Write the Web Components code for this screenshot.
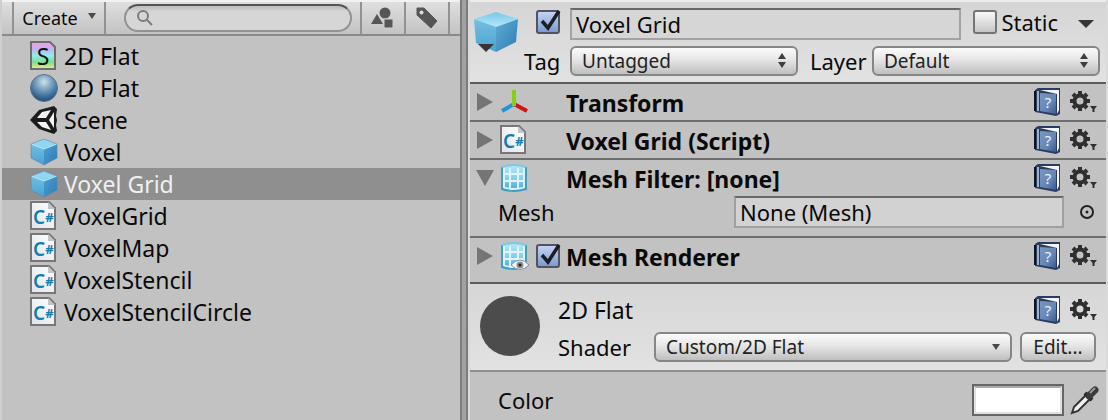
<!DOCTYPE html>
<html lang="en">
<head>
<meta charset="utf-8">
<title>Voxel Grid – Inspector</title>
<style>
  html, body { margin: 0; }
  body {
    font: 22px/28px "Noto Sans", "Open Sans", sans-serif;
    color: #0a0a0a;
    background: #c2c2c2;
    --line: #6e6e6e;
    --control: linear-gradient(#fbfbfb, #e6e6e6 45%, #c0bfc0);
  }
</style>
</head>
<body>
<editor-window>
  <project-panel slot="project">
    <asset-row icon="shader">2D Flat</asset-row>
    <asset-row icon="material">2D Flat</asset-row>
    <asset-row icon="scene">Scene</asset-row>
    <asset-row icon="cube">Voxel</asset-row>
    <asset-row icon="cube" selected>Voxel Grid</asset-row>
    <asset-row icon="script">VoxelGrid</asset-row>
    <asset-row icon="script">VoxelMap</asset-row>
    <asset-row icon="script">VoxelStencil</asset-row>
    <asset-row icon="script">VoxelStencilCircle</asset-row>
  </project-panel>
  <inspector-panel slot="inspector">
    <object-header></object-header>
    <component-section icon="transform" heading="Transform"></component-section>
    <component-section icon="script" heading="Voxel Grid (Script)"></component-section>
    <component-section icon="mesh" heading="Mesh Filter: [none]" open>
      <mesh-field></mesh-field>
    </component-section>
    <component-section icon="renderer" heading="Mesh Renderer" toggle last></component-section>
    <material-header></material-header>
    <color-field></color-field>
  </inspector-panel>
</editor-window>

<script>
const MESH = `<defs><linearGradient id="g" x2="0" y2="1"><stop offset="0" stop-color="#b5e8f6"/><stop offset=".5" stop-color="#8fcfea"/><stop offset="1" stop-color="#4aa6d2"/></linearGradient></defs>
    <path d="M2 4Q14 0 26 4V26Q14 30 2 26Z" fill="url(#g)"/><path d="M3 11H25M3 18H25M4 25Q14 27 24 25M10 5V26M18 5V26M4 5V25M24 5V25" fill="none" stroke="#dcf5fc" stroke-width="2"/><path d="M2 4V26Q14 30 26 26V4" fill="none" stroke="#3d9fca" stroke-width="2"/><path d="M2 4Q14 0 26 4" fill="none" stroke="#7cc9e4" stroke-width="2"/>`;

const ICONS = {
  shader: [28, 30, `<defs><linearGradient id="g" x2="0" y2="1"><stop offset="0" stop-color="#f59be8"/><stop offset=".3" stop-color="#b9b8f4"/><stop offset=".5" stop-color="#8df0ee"/><stop offset=".75" stop-color="#7fdc8c"/><stop offset="1" stop-color="#f2ee84"/></linearGradient></defs>
    <path d="M1 1H20L25 6V28H1Z" fill="url(#g)" stroke="#6d6d6d" stroke-width="2"/><text x="13" y="24" text-anchor="middle" font-size="23" fill="#111">S</text>`],
  material: [28, 28, `<defs><radialGradient id="g" cx=".5" cy=".28" r=".7"><stop offset="0" stop-color="#d3e2ec"/><stop offset=".35" stop-color="#86abc6"/><stop offset=".7" stop-color="#4778a3"/><stop offset="1" stop-color="#244d80"/></radialGradient></defs>
    <circle cx="14" cy="14" r="13.5" fill="url(#g)" stroke="#5d7387"/>`],
  scene: [28, 28, `<path d="M0 14 9 4 24 0 27 3 26 10 27 14 26 19 27 25 24 28 9 23Z" fill="#1c1c1c"/><path d="M7 12 12 6 21 4 16 12ZM7 16H16L21 24 12 21ZM19 14 24 6V22Z" fill="#f4f4f4"/>`],
  cube: [28, 28, `<defs><linearGradient id="a" x2="0" y2="1"><stop offset="0" stop-color="#6cc0e8"/><stop offset="1" stop-color="#4ba0d0"/></linearGradient><linearGradient id="b" x2="1" y2="1"><stop offset="0" stop-color="#4c9fd2"/><stop offset="1" stop-color="#2b7db4"/></linearGradient></defs>
    <path d="M1 6 14 11V27L1 20Z" fill="url(#a)"/><path d="M27 6 14 11V27L27 20Z" fill="url(#b)"/><path d="M1 6 14 1 27 6 14 11Z" fill="#8fd6f2"/><path d="M1 6 14 11 27 6" fill="none" stroke="#b4e6f6"/><path d="M1 6 14 1 27 6V20L14 27 1 20Z" fill="none" stroke="#65849a" stroke-opacity=".6"/>`],
  prefab: [44, 40, `<defs><linearGradient id="a" x2="0" y2="1"><stop offset="0" stop-color="#74bfe2"/><stop offset="1" stop-color="#4aa3d0"/></linearGradient><linearGradient id="b" x2="1" y2="1"><stop offset="0" stop-color="#62abd4"/><stop offset="1" stop-color="#2c7eb4"/></linearGradient><linearGradient id="c" x2="0" y2="1"><stop offset="0" stop-color="#78c8ea"/><stop offset="1" stop-color="#b4e8f8"/></linearGradient></defs>
    <path d="M0 7 22 14V40L2 31Z" fill="url(#a)"/><path d="M44 7 22 14V40L42 30Z" fill="url(#b)"/><path d="M0 7 22 0 44 7 22 15Z" fill="url(#c)"/>`],
  script: [28, 30, `<defs><linearGradient id="g" x1="1" y1="0" x2="0" y2="1"><stop offset="0" stop-color="#fff"/><stop offset="1" stop-color="#dfe4e9"/></linearGradient></defs>
    <path d="M1 1H19L25 7V28H1Z" fill="url(#g)" stroke="#777" stroke-width="2"/><path d="M18 1V8H25Z" fill="#c2c6ca"/><text x="3" y="23" font-weight="600" fill="#117ead"><tspan font-size="19">C</tspan><tspan font-size="13" font-weight="700" dy="-2">#</tspan></text>`],
  transform: [28, 28, `<g fill="none" stroke-width="4"><path d="M14 16 2 23" stroke="#2494d8"/><path d="M14 16 27 23" stroke="#d11313"/><path d="M14 18V2" stroke="#86cf17"/></g>`],
  mesh: [28, 30, MESH],
  renderer: [28, 30, MESH + `<path d="M11 24Q20 14 29 24 20 33 11 24Z" fill="#f4f4f4" stroke="#8a9298"/><circle cx="20" cy="24" r="3.5" fill="#86929a"/><circle cx="20" cy="24" r="1.5" fill="#222"/>`],
  shapes: [24, 22, `<g fill="#565656"><circle cx="14" cy="6" r="5.5"/><path d="M0 17 6 7 12 17Z"/><path d="M13 12H22V21H13Z" stroke="#d0d0d0" stroke-width="1"/></g>`],
  tag: [24, 24, `<path d="M2 2H9L22 15 16 22 2 9Z" fill="#565656" stroke="#565656" stroke-linejoin="round"/><circle cx="6.500" cy="6.500" r="2" fill="#dcdcdc"/>`],
  lens: [18, 18, `<circle cx="7" cy="7" r="5" fill="none" stroke="#7c7c7c" stroke-width="2"/><path d="M10.500 10.500 16 16" stroke="#7c7c7c" stroke-width="2"/>`],
  closed: [16, 18, `<path d="M0 0 16 9 0 18Z" fill="#757575"/>`],
  opened: [18, 16, `<path d="M0 0H18L9 16Z" fill="#757575"/>`],
  caret: [16, 8, `<path d="M0 0H16L8 8Z" fill="#353535"/>`],
  smallcaret: [8, 6, `<path d="M0 0H8L4 6Z" fill="#4a4a4a"/>`],
  updown: [8, 16, `<path d="M0 6 4 0 8 6ZM0 9H8L4 15Z" fill="#3e3e3e"/>`],
  help: [28, 30, `<defs><linearGradient id="g" x2="1" y2="1"><stop offset="0" stop-color="#7b97bd"/><stop offset=".6" stop-color="#6486b6"/><stop offset="1" stop-color="#38598c"/></linearGradient></defs>
    <path d="M1 3 4 1H26V27L22 29 1 25Z" fill="#2a3c60"/><path d="M6 3H25V23L23 27V7Z" fill="#f4f5f8"/><path d="M4 4V24" stroke="#9db2cf" stroke-width="2"/><path d="M1 4V24" stroke="#0c1424" stroke-width="2"/><path d="M6 6 22 7V27L6 24Z" fill="url(#g)"/><text x="14" y="21" text-anchor="middle" font-size="15" fill="#eef4fb">?</text>`],
  gear: [28, 24, `<g stroke="#2f2f2f" fill="none"><circle cx="10" cy="11" r="5.500" stroke-width="4"/><path d="M10 1V4M10 18V21M0 11H3M17 11H20M3 4 5 6M15 16 17 18M3 18 5 16M15 6 17 4" stroke-width="4"/></g><path d="M20 16H27L24.500 19V22H22.500V19Z" fill="#2f2f2f"/>`],
  pick: [14, 14, `<circle cx="7" cy="7" r="6" fill="none" stroke="#222" stroke-width="2"/><circle cx="7" cy="7" r="1.500" fill="#222"/>`],
  dropper: [30, 30, `<path d="M2 28 4 22 16 10 20 14 8 26Z" fill="#f2f2f2" stroke="#333" stroke-width="2"/><path d="M15 8 22 15" stroke="#222" stroke-width="4"/><path d="M19 11 25 5" stroke="#3a3a3a" stroke-width="7" stroke-linecap="round"/><path d="M20 8 25 3" stroke="#999" stroke-width="2"/>`],
};

const define = (name, css, html) => customElements.define(name, class extends HTMLElement {
  constructor() {
    super();
    this.attachShadow({ mode: "open" });
  }
  connectedCallback() {
    const body = typeof html === "function" ? html(this) : html;
    this.shadowRoot.innerHTML = `<style>
      :host { display: block; }
      *, :host { box-sizing: border-box; }
      button, input, select { font: inherit; color: inherit; margin: 0; border-radius: 0; }
      ${css}</style>${body}`;
  }
});

define("ui-icon", `
  :host { display: inline-block; flex: none; line-height: 0; }
  svg { display: block; overflow: visible; font-family: "Noto Sans", sans-serif; }
`, el => {
  const [w, h, art] = ICONS[el.getAttribute("name")];
  return `<svg width="${w}" height="${h}" viewBox="0 0 ${w} ${h}" aria-hidden="true">${art}</svg>`;
});

define("editor-window", `
  :host { display: grid; grid-template-columns: minmax(0, 23fr) 8px minmax(0, 32fr); min-height: 100vh; }
  .splitter { background: #a2a2a2; border: solid #7c7c7c; border-width: 0 2px; }
`, `<slot name="project"></slot><div class="splitter"></div><slot name="inspector"></slot>`);

define("project-panel", `
  :host { border-left: 2px solid #cfcfcf; }
  header { display: flex; height: 36px; border-top: 2px solid #f2f2f2; border-bottom: 2px solid #8a8a8a;
    background: linear-gradient(#dfdfdf, #c3c3c3); padding: 0 10px; }
  button { border: 0 solid #929292; background: none; padding: 0; display: flex; align-items: center; justify-content: center; }
  .create { width: 94px; border-width: 0 2px; font-size: 18px; gap: 10px; }
  .create ui-icon { margin-bottom: 4px; }
  .filter { width: 44px; border-left-width: 2px; }
  .filter:last-child { width: 46px; border-right-width: 2px; }
  label { flex: 1; min-width: 0; display: flex; align-items: center; gap: 6px; height: 28px; margin: 2px 8px 0 18px; padding: 0 10px;
    border: 2px solid #929292; border-top-color: #555; border-radius: 14px; background: linear-gradient(#bcbcbc, #d6d6d6 6px); }
  input { flex: 1; min-width: 0; border: 0; outline: 0; background: none; height: 22px; padding: 0; font-size: 18px; }
  .list { padding-top: 4px; }
`, `<header>
    <button class="create">Create <ui-icon name="smallcaret"></ui-icon></button>
    <label><ui-icon name="lens"></ui-icon><input type="search" aria-label="Search"></label>
    <button class="filter" aria-label="Filter by type"><ui-icon name="shapes"></ui-icon></button>
    <button class="filter" aria-label="Filter by label"><ui-icon name="tag"></ui-icon></button>
  </header>
  <div class="list" role="list"><slot></slot></div>`);

define("asset-row", `
  :host { display: grid; grid-template-columns: 28px 1fr; align-items: center; gap: 6px; height: 32px; padding: 0 28px; }
  :host([selected]) { background: #8f8f8f; color: #f0f0f0; }
  span { font-size: 23px; line-height: 32px; white-space: nowrap; }
`, el => `<ui-icon name="${el.getAttribute("icon")}"></ui-icon><span role="listitem"><slot></slot></span>`);

define("inspector-panel", `
  :host { border: solid #dadada; border-width: 0 2px; background: #c2c2c2; }
`, `<slot></slot>`);

define("ui-check", `
  :host { flex: none; }
  label { display: flex; align-items: center; gap: 4px; }
  .box { display: grid; width: 24px; height: 24px; }
  .box > * { grid-area: 1 / 1; }
  input { appearance: none; width: 24px; height: 24px; border: 2px solid #757575; border-radius: 3px; background: linear-gradient(#f8f8f8, #c6c6c6); }
  input:checked { border-color: #4f5461; background: linear-gradient(#c3d3f2, #7c9bd2); }
  svg { pointer-events: none; overflow: visible; visibility: hidden; }
  input:checked + svg { visibility: visible; }
`, el => `<label><span class="box"><input type="checkbox" ${el.hasAttribute("checked") ? "checked" : ""} aria-label="${el.getAttribute("name")}">
  <svg width="24" height="24"><path d="M6 11 12 18 23 1" fill="none" stroke="#1d1d24" stroke-width="3.500"/></svg></span><slot></slot></label>`);

define("ui-dropdown", `
  :host { min-width: 0; }
  label { display: flex; align-items: center; }
  .name { flex: none; width: var(--label, auto); }
  .box { flex: 1; min-width: 0; display: grid; align-items: center; }
  .box > * { grid-area: 1 / 1; }
  select { appearance: none; width: 100%; height: 30px; padding: 0 24px 0 10px; border: 2px solid #868686; border-radius: 6px;
    background: var(--control); font-size: 19px; line-height: 24px; color: #222; }
  ui-icon { justify-self: end; margin-right: 12px; pointer-events: none; }
`, el => `<label><span class="name">${el.getAttribute("label")}</span><span class="box">
  <select><option>${el.getAttribute("value")}</option></select><ui-icon name="${el.getAttribute("arrow") || "updown"}"></ui-icon></span></label>`);

define("object-header", `
  :host { height: 84px; padding: 6px 6px 0 4px; border-top: 2px solid #ededed; border-bottom: 2px solid #5c5c5c;
    background: linear-gradient(#d5d5d5, #e2e2e2); display: grid; grid-template-columns: 48px minmax(0, 1fr); column-gap: 2px; }
  .cube { display: grid; width: 44px; height: 44px; align-items: end; }
  .cube > * { grid-area: 1 / 1; }
  .cube .more { margin-left: 4px; }
  .top { display: flex; align-items: center; height: 32px; padding-left: 12px; }
  .top input { flex: 1; min-width: 0; height: 32px; margin: 0 12px 0 10px; padding: 0 4px; background: #d6d6d6;
    border: 2px solid #a2a2a2; border-top-color: #686868; }
  ui-check { margin-bottom: 4px; }
  .menu { border: 0; background: none; padding: 0; width: 28px; display: grid; justify-content: center; margin-left: 14px; }
  .bottom { display: flex; gap: 12px; margin-top: 6px; }
  .tag { --label: 46px; flex: 1 1 46px; }
  .layer { --label: 62px; flex: 1 1 62px; }
`, `<div class="cube"><ui-icon name="prefab"></ui-icon><ui-icon class="more" name="caret"></ui-icon></div>
  <div>
    <div class="top">
      <ui-check name="Enabled" checked></ui-check>
      <input type="text" value="Voxel Grid" aria-label="Name">
      <ui-check name="Static">Static</ui-check>
      <button class="menu" aria-label="Static flags"><ui-icon name="caret"></ui-icon></button>
    </div>
    <div class="bottom">
      <ui-dropdown class="tag" label="Tag" value="Untagged"></ui-dropdown>
      <ui-dropdown class="layer" label="Layer" value="Default"></ui-dropdown>
    </div>
  </div>`);

define("section-tools", `
  :host { display: flex; gap: 8px; align-items: center; flex: none; }
  button { border: 0; background: none; padding: 0; line-height: 0; }
`, `<button aria-label="Help"><ui-icon name="help"></ui-icon></button><button aria-label="Settings"><ui-icon name="gear"></ui-icon></button>`);

define("component-section", `
  :host { border-bottom: 2px solid var(--line); }
  :host([last]) { padding-bottom: 8px; border-color: #5c5c5c; }
  header { display: grid; grid-template-columns: 18px 28px 24px minmax(0, 1fr) auto; align-items: center; height: 36px; padding: 0 8px 0 6px; }
  .fold { border: 0; background: none; padding: 0; line-height: 0; }
  .art { margin-left: 6px; }
  .check { margin-left: 14px; }
  h2 { margin: 0 0 0 20px; padding-top: 2px; font-size: 23px; line-height: 28px; font-weight: 700; white-space: nowrap; }
`, el => `<header>
    <button class="fold" aria-label="Fold"><ui-icon name="${el.hasAttribute("open") ? "opened" : "closed"}"></ui-icon></button>
    <ui-icon class="art" name="${el.getAttribute("icon")}"></ui-icon>
    <span class="check">${el.hasAttribute("toggle") ? `<ui-check name="Enabled" checked></ui-check>` : ""}</span>
    <h2>${el.getAttribute("heading")}</h2><section-tools></section-tools>
  </header><slot></slot>`);

define("mesh-field", `
  :host { display: flex; align-items: center; padding: 0 12px 8px 28px; }
  label { width: 236px; flex: none; }
  input { flex: 1; min-width: 0; height: 32px; padding: 0 4px; background: #d2d2d2; border: 2px solid #a0a0a0; border-top-color: #686868; }
  button { border: 0; background: none; padding: 0; margin-left: 16px; line-height: 0; }
`, `<label for="m">Mesh</label><input id="m" type="text" value="None (Mesh)" readonly><button aria-label="Select mesh"><ui-icon name="pick"></ui-icon></button>`);

define("material-header", `
  :host { display: grid; grid-template-columns: 60px minmax(0, 1fr); gap: 18px; height: 88px; padding: 12px 8px 0 10px;
    background: linear-gradient(#d6d6d6, #e2e2e2); border-bottom: 2px solid #8f8f8f; }
  .ball { width: 60px; height: 60px; border-radius: 50%; background: #4c4c4c; }
  .top { display: flex; justify-content: space-between; height: 28px; align-items: center; }
  h2 { font-size: 23px; line-height: 28px; font-weight: 400; margin: 0; }
  .bottom { display: flex; gap: 8px; margin-top: 8px; padding-right: 2px; }
  ui-dropdown { --label: 96px; flex: 1; }
  button { width: 76px; height: 30px; padding: 0; border: 2px solid #868686; border-radius: 6px; background: var(--control); font-size: 19px; line-height: 24px; color: #222; }
`, `<div class="ball"></div><div>
    <div class="top"><h2>2D Flat</h2><section-tools></section-tools></div>
    <div class="bottom"><ui-dropdown label="Shader" value="Custom/2D Flat" arrow="smallcaret"></ui-dropdown><button>Edit...</button></div>
  </div>`);

define("color-field", `
  :host { display: flex; align-items: center; height: 48px; padding: 8px 6px 0 28px; }
  label { flex: 1; }
  input { appearance: none; width: 92px; height: 32px; padding: 0; border: 2px solid #666; background: #fff; }
  input::-webkit-color-swatch-wrapper { padding: 0; }
  input::-webkit-color-swatch { border: 2px solid #e0e0e0; border-top-color: #aaa; border-radius: 0; }
  button { border: 0; background: none; padding: 0; margin-left: 6px; line-height: 0; }
`, `<label for="c">Color</label><input id="c" type="color" value="#ffffff"><button aria-label="Pick color"><ui-icon name="dropper"></ui-icon></button>`);
</script>
</body>
</html>
